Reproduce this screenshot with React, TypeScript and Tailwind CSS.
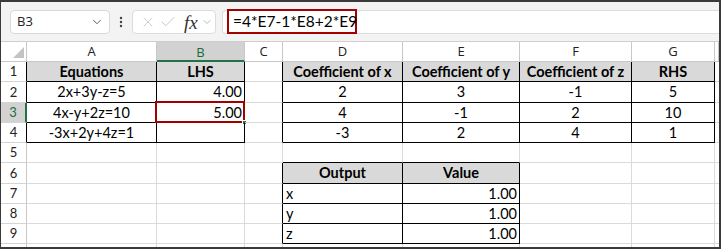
import { Check, ChevronDown, EllipsisVertical, X } from "lucide-react";

type Cell = { v: string; align: "c" | "r" | "l"; bold?: boolean };

const colLetters = ["A", "B", "C", "D", "E", "F", "G", ""];

const cells: Record<string, Cell> = {
  "1-1": { v: "Equations", align: "c", bold: true },
  "1-2": { v: "LHS", align: "c", bold: true },
  "1-4": { v: "Coefficient of x", align: "c", bold: true },
  "1-5": { v: "Coefficient of y", align: "c", bold: true },
  "1-6": { v: "Coefficient of z", align: "c", bold: true },
  "1-7": { v: "RHS", align: "c", bold: true },
  "2-1": { v: "2x+3y-z=5", align: "c" },
  "2-2": { v: "4.00", align: "r" },
  "2-4": { v: "2", align: "c" },
  "2-5": { v: "3", align: "c" },
  "2-6": { v: "-1", align: "c" },
  "2-7": { v: "5", align: "c" },
  "3-1": { v: "4x-y+2z=10", align: "c" },
  "3-2": { v: "5.00", align: "r" },
  "3-4": { v: "4", align: "c" },
  "3-5": { v: "-1", align: "c" },
  "3-6": { v: "2", align: "c" },
  "3-7": { v: "10", align: "c" },
  "4-1": { v: "-3x+2y+4z=1", align: "c" },
  "4-4": { v: "-3", align: "c" },
  "4-5": { v: "2", align: "c" },
  "4-6": { v: "4", align: "c" },
  "4-7": { v: "1", align: "c" },
  "6-4": { v: "Output", align: "c", bold: true },
  "6-5": { v: "Value", align: "c", bold: true },
  "7-4": { v: "x", align: "l" },
  "7-5": { v: "1.00", align: "r" },
  "8-4": { v: "y", align: "l" },
  "8-5": { v: "1.00", align: "r" },
  "9-4": { v: "z", align: "l" },
  "9-5": { v: "1.00", align: "r" },
};

// which cells sit inside a bordered table
function inTable(r: number, c: number) {
  if (r >= 1 && r <= 4 && (c === 1 || c === 2)) return true;
  if (r >= 1 && r <= 4 && c >= 4 && c <= 7) return true;
  if (r >= 6 && r <= 9 && (c === 4 || c === 5)) return true;
  return false;
}

const rows = [1, 2, 3, 4, 5, 6, 7, 8, 9, 10];

function GridCell({ r, c }: { r: number; c: number }) {
  if (c === 0) {
    const sel = r === 3;
    return (
      <div
        className={`flex items-center justify-center border-b border-b-[#d4d4d4] text-[13px] leading-none ${
          sel
            ? "bg-[#d2d2d2] border-r-2 border-r-[#217346] text-[#1d6b3d]"
            : inTable(r, 1)
              ? "bg-white border-r border-r-black text-[#222]"
              : "bg-white border-r border-r-[#c8c8c8] text-[#222]"
        } ${r === 10 ? "border-b-0" : ""}`}
      >
        {r < 10 ? r : ""}
      </div>
    );
  }
  const cell = cells[`${r}-${c}`];
  const blackR = inTable(r, c) || inTable(r, c + 1);
  const blackB = inTable(r, c) || inTable(r + 1, c);
  const fill = cell?.bold;
  return (
    <div
      className={`relative flex items-center whitespace-nowrap px-[3px] pt-[1px] text-[14.5px] leading-none text-black ${
        c === 8 ? "" : blackR ? "border-r border-r-black" : "border-r border-r-[#dadada]"
      } ${r === 10 ? "" : blackB ? "border-b border-b-black" : "border-b border-b-[#dadada]"} ${
        fill ? "bg-[#d9d9d9] font-bold" : ""
      } ${cell?.align === "c" ? "justify-center" : cell?.align === "r" ? "justify-end pr-[2px]" : "justify-start"}`}
    >
      {cell?.v}
      {r === 3 && c === 2 && (
        <>
          <div className="pointer-events-none absolute -left-[2px] -top-[2px] -right-[1px] -bottom-[1px] border-2 border-[#a30000]" />
          <div className="absolute -right-[3px] -bottom-[3px] h-[5px] w-[5px] bg-[#217346] border border-white" />
        </>
      )}
    </div>
  );
}

export default function App() {
  return (
    <div className="w-[721px] h-[249px] overflow-hidden bg-white border-t-2 border-r-2 border-b-2 border-l border-[#3a3a3a] font-['Lato',sans-serif]">
      {/* formula bar */}
      <div className="flex h-[39px] items-start bg-[#f3f3f3] pt-[8px]">
        <div className="ml-[9px] flex h-[24px] w-[100px] items-center justify-between rounded-[4px] border border-[#d9d9d9] bg-white pl-[6px] pr-[5px] font-['Open_Sans',sans-serif] text-[13px] text-[#222]">
          <span>B3</span>
          <ChevronDown size={14} strokeWidth={1.6} className="text-[#555]" />
        </div>
        <div className="flex h-[24px] w-[22px] items-center justify-center text-[#444]">
          <EllipsisVertical size={14} strokeWidth={2.2} />
        </div>
        <div className="flex h-[24px] w-[84px] items-center rounded-[4px] border border-[#dcdcdc] bg-white pl-[7px]">
          <X size={16} strokeWidth={1} className="text-[#b5b5b5]" />
          <Check size={18} strokeWidth={1} className="ml-[3px] text-[#b5b5b5]" />
          <span className="ml-[7px] font-['Liberation_Serif',serif] text-[19px] italic leading-none text-[#333]">fx</span>
          <ChevronDown size={12} strokeWidth={1.4} className="ml-[3px] text-[#999]" />
        </div>
        <div className="ml-[6px] flex h-[24px] flex-1 items-center rounded-l-[4px] border-y border-l border-[#dcdcdc] bg-white pl-[4px]">
          <div className="-mt-[1px] flex h-[25px] w-[130px] shrink-0 items-center whitespace-nowrap border-2 border-[#a30000] pl-[4px] text-[15.5px] leading-none text-black">
            =4*E7-1*E8+2*E9
          </div>
        </div>
      </div>

      {/* sheet */}
      <div className="grid grid-cols-[26px_130px_88px_38px_120px_117px_112px_83px_4px] grid-rows-[20px_20px_21px_20px_20px_20px_21px_20px_20px_20px_3px] border-t border-t-[#cfcfcf]">
        {/* column header row */}
        <div className="relative border-r border-b border-[#c8c8c8] bg-white">
          <svg width="26" height="20" className="absolute left-0 top-0">
            <polygon points="23,5 23,16 12,16" fill="#c4c4c4" />
          </svg>
        </div>
        {colLetters.map((l, i) =>
          l === "B" ? (
            <div
              key={i}
              className="flex items-center justify-center border-r border-r-[#c8c8c8] border-b-2 border-b-[#217346] bg-[#d2d2d2] pt-[2px] font-['Open_Sans',sans-serif] text-[13px] leading-none text-[#1d6b3d]"
            >
              {l}
            </div>
          ) : (
            <div
              key={i}
              className={`flex items-center justify-center border-b border-b-[#c8c8c8] bg-white font-['Open_Sans',sans-serif] text-[13px] leading-none text-[#222] ${
                i === 8 ? "" : "border-r border-r-[#c8c8c8]"
              }`}
            >
              {l}
            </div>
          )
        )}
        {rows.map((r) =>
          [0, 1, 2, 3, 4, 5, 6, 7, 8].map((c) => <GridCell key={`${r}-${c}`} r={r} c={c} />)
        )}
      </div>
    </div>
  );
}
